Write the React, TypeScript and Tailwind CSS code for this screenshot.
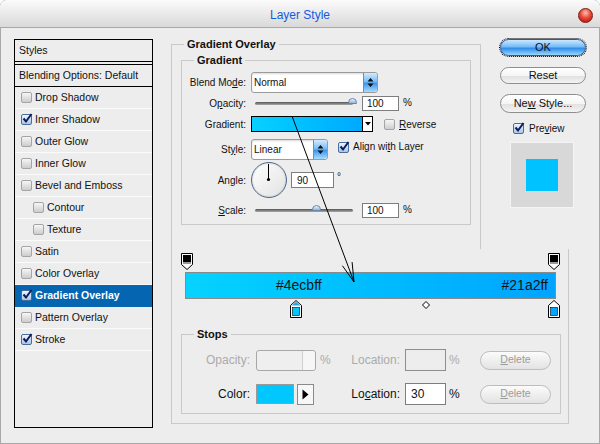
import React from "react";

type StyleItem = { label: string; checked?: boolean; indent?: boolean; selected?: boolean };

const styleItems: StyleItem[] = [
  { label: "Drop Shadow" },
  { label: "Inner Shadow", checked: true },
  { label: "Outer Glow" },
  { label: "Inner Glow" },
  { label: "Bevel and Emboss" },
  { label: "Contour", indent: true },
  { label: "Texture", indent: true },
  { label: "Satin" },
  { label: "Color Overlay" },
  { label: "Gradient Overlay", checked: true, selected: true },
  { label: "Pattern Overlay" },
  { label: "Stroke", checked: true },
];

function CheckBox({ checked }: { checked?: boolean }) {
  return (
    <span
      className={
        checked
          ? "relative inline-flex w-[11px] h-[11px] shrink-0 rounded-[2px] border border-[#4a6c9b] bg-gradient-to-b from-[#eef5fd] to-[#a9c6e6]"
          : "relative inline-flex w-[11px] h-[11px] shrink-0 rounded-[2px] border border-[#a4a4a4] bg-gradient-to-b from-[#f6f6f6] to-[#cdcdcd]"
      }
    >
      {checked && (
        <svg width="11" height="11" viewBox="0 0 11 11" className="absolute left-[0px] top-[-2px]">
          <path d="M1.5 5.5 L4 8.5 L9.5 1" stroke="#0b1d5c" strokeWidth="2" fill="none" />
        </svg>
      )}
    </span>
  );
}

function Spinner() {
  return (
    <span className="w-[14px] h-full rounded-r-[3px] border-l border-[#5b8fd0] bg-[linear-gradient(to_bottom,#d3ebff_0%,#78bdf7_45%,#3d95ea_55%,#a9dcff_100%)] flex items-center justify-center">
      <svg width="7" height="11" viewBox="0 0 7 11">
        <path d="M3.5 1 L6.5 4.5 H0.5 Z M3.5 10 L6.5 6.5 H0.5 Z" fill="#111" />
      </svg>
    </span>
  );
}

function Slider({ thumb }: { thumb: string }) {
  return (
    <div className="relative w-[106px] h-full flex items-center px-[4px]">
      <div className="h-[3px] w-full rounded-full bg-gradient-to-b from-[#555] to-[#aaa]" />
      <span
        className={`absolute top-[2px] w-[9px] h-[6px] rounded-t-full border border-[#6a86a8] bg-gradient-to-b from-[#eef5ff] to-[#8fb4dc] ${thumb}`}
      />
    </div>
  );
}

function NumField({ value, className }: { value: string; className: string }) {
  return (
    <div className={`border border-[#7d7d7d] bg-white flex items-center text-[10px] ${className}`}>{value}</div>
  );
}

function Pill({ children, className }: { children: React.ReactNode; className: string }) {
  return (
    <div
      className={`rounded-full border flex items-center justify-center ${className}`}
    >
      {children}
    </div>
  );
}

function TopStop() {
  return (
    <svg width="12" height="17" viewBox="0 0 12 17">
      <path d="M0.5 0.5 H11.5 V11.5 L6 16.5 L0.5 11.5 Z" fill="#fff" stroke="#000" />
      <rect x="2" y="2" width="8" height="7" fill="#000" />
      <rect x="2" y="9" width="8" height="2" fill="#9a9a9a" />
    </svg>
  );
}

function BottomStop({ color, selected }: { color: string; selected?: boolean }) {
  return (
    <svg width="12" height="18" viewBox="0 0 12 18">
      <path d="M6 0.5 L11.5 5.5 V17.5 H0.5 V5.5 Z" fill="#fff" stroke="#000" />
      <path d="M6 1.8 L10.2 5.5 H1.8 Z" fill={selected ? "#25a3e2" : "#fff"} />
      <rect x="2.5" y="7.5" width="7" height="8" fill={color} stroke="#000" strokeWidth="0.6" />
    </svg>
  );
}

function TitleBar() {
  return (
    <div className="h-[28px] border-b border-[#a7a7a7] bg-gradient-to-b from-[#fbfbfb] to-[#d9d9d9] rounded-t-[6px] grid grid-cols-[1fr_auto_1fr] items-center">
      <span />
      <span className="text-[12px] text-[#1559e0] pt-[3px]">Layer Style</span>
      <span className="justify-self-end mr-[7px] mt-[4px] w-[15px] h-[15px] rounded-full border border-[#7a1a12] bg-[radial-gradient(circle_at_50%_30%,#ffc2b6_0%,#ea4a38_45%,#a40e08_100%)]" />
    </div>
  );
}

function StylesPanel() {
  return (
    <div className="w-[139px] h-[389px] border border-black flex flex-col text-[10.5px]">
      <div className="h-[25px] border-b-[4px] border-double border-black pl-[4px] flex items-center">Styles</div>
      <div className="h-[22px] border-b border-black pl-[4px] flex items-center">Blending Options: Default</div>
      {styleItems.map((item) => (
        <div
          key={item.label}
          className={
            item.selected
              ? "h-[22px] border-b border-[#0565b0] bg-[#0565b0] text-white font-bold flex items-center"
              : "h-[22px] border-b border-[#fbfbfb] flex items-center"
          }
        >
          <span className={item.indent ? "ml-[18px] flex items-center" : "ml-[6px] flex items-center"}>
            <CheckBox checked={item.checked} />
          </span>
          <span className="ml-[3px]">{item.label}</span>
        </div>
      ))}
    </div>
  );
}

function OverlayBox() {
  return (
    <div className="relative mt-[5px] w-[310px] h-[205px] border-x border-t border-[#c9c9c9]">
      <span className="absolute left-[12px] top-[-8px] bg-[#ededed] px-[3px] text-[11px] font-bold leading-[14px]">
        Gradient Overlay
      </span>
      <div className="relative ml-[9px] mt-[15px] w-[290px] h-[165px] border border-[#c9c9c9] text-[10px]">
        <span className="absolute left-[12px] top-[-8px] bg-[#ededed] px-[3px] text-[11px] font-bold leading-[14px]">
          Gradient
        </span>

        <div className="mt-[11px] h-[21px] flex items-center">
          <span className="w-[64px] text-right">
            Blend Mo<span className="underline">d</span>e:
          </span>
          <div className="ml-[5px] w-[127px] h-[21px] rounded-[3px] border border-[#9b9b9b] bg-white flex items-center shadow-[inset_0_1px_2px_rgba(0,0,0,0.15)]">
            <span className="flex-1 pl-[2px]">Normal</span>
            <Spinner />
          </div>
        </div>

        <div className="mt-[3px] h-[15px] flex items-center">
          <span className="w-[64px] text-right">
            O<span className="underline">p</span>acity:
          </span>
          <div className="ml-[5px] h-full">
            <Slider thumb="left-[97px]" />
          </div>
          <NumField value="100" className="ml-[5px] w-[37px] h-[15px] pl-[4px]" />
          <span className="ml-[4px] mt-[-3px]">%</span>
        </div>

        <div className="mt-[5px] h-[16px] flex items-center">
          <span className="w-[64px] text-right">Gradient:</span>
          <div className="ml-[5px] w-[122px] h-[16px] border border-black flex">
            <div className="flex-1 bg-[linear-gradient(to_right,#08d0ff,#00c2ff_40%,#00aaff)]" />
            <div className="w-[10px] border-l border-black bg-white flex items-center justify-center">
              <svg width="6" height="4" viewBox="0 0 6 4">
                <path d="M0 0 H6 L3 3.5 Z" fill="#000" />
              </svg>
            </div>
          </div>
          <span className="ml-[11px] flex items-center">
            <CheckBox />
          </span>
          <span className="ml-[4px]">
            <span className="underline">R</span>everse
          </span>
        </div>

        <div className="mt-[7px] h-[21px] flex items-center">
          <span className="w-[64px] text-right">
            St<span className="underline">y</span>le:
          </span>
          <div className="ml-[5px] w-[77px] h-[21px] rounded-[3px] border border-[#9b9b9b] bg-white flex items-center shadow-[inset_0_1px_2px_rgba(0,0,0,0.15)]">
            <span className="flex-1 pl-[2px]">Linear</span>
            <Spinner />
          </div>
          <span className="ml-[10px] mt-[-5px] flex items-center">
            <CheckBox checked />
          </span>
          <span className="ml-[4px] mt-[-7px]">
            Align wi<span className="underline">t</span>h Layer
          </span>
        </div>

        <div className="mt-[2px] h-[36px] flex items-center">
          <span className="w-[64px] text-right">
            An<span className="underline">g</span>le:
          </span>
          <div className="ml-[5px] w-[36px] h-[36px] rounded-full border-[1.5px] border-[#4f678c] bg-gradient-to-br from-white to-[#e2e2e2] shadow-[inset_0_0_2px_rgba(0,0,0,0.25)]">
            <svg width="33" height="33" viewBox="0 0 33 33">
              <line x1="16.5" y1="16.5" x2="16.5" y2="1" stroke="#000" strokeWidth="1" />
              <circle cx="16.5" cy="16.5" r="1.6" fill="#000" />
            </svg>
          </div>
          <NumField value="90" className="ml-[4px] w-[43px] h-[16px] pl-[5px]" />
          <span className="ml-[3px] mt-[-8px]">°</span>
        </div>

        <div className="mt-[5px] h-[15px] flex items-center">
          <span className="w-[64px] text-right">
            <span className="underline">S</span>cale:
          </span>
          <div className="ml-[5px] h-full">
            <Slider thumb="left-[61px]" />
          </div>
          <NumField value="100" className="ml-[5px] w-[37px] h-[15px] pl-[4px]" />
          <span className="ml-[4px] mt-[-3px]">%</span>
        </div>
      </div>
    </div>
  );
}

function SideButtons() {
  return (
    <div className="ml-[19px] w-[86px] flex flex-col text-[11px]">
      <Pill className="h-[17px] border-[#2f5a96] outline outline-1 outline-dotted outline-black bg-[linear-gradient(to_bottom,#cbe7ff_0%,#74bcf8_45%,#2f8de8_55%,#98d6ff_100%)]">
        OK
      </Pill>
      <Pill className="mt-[11px] h-[17px] border-[#8e8e8e] bg-[linear-gradient(to_bottom,#ffffff_0%,#f5f5f5_50%,#e2e2e2_55%,#f3f3f3_100%)]">
        Reset
      </Pill>
      <Pill className="mt-[10px] h-[19px] border-[#8e8e8e] bg-[linear-gradient(to_bottom,#ffffff_0%,#f5f5f5_50%,#e2e2e2_55%,#f3f3f3_100%)]">
        <span>
          Ne<span className="underline">w</span> Style...
        </span>
      </Pill>
      <div className="mt-[10px] h-[11px] pl-[13px] flex items-center text-[10px]">
        <CheckBox checked />
        <span className="ml-[5px]">
          Pre<span className="underline">v</span>iew
        </span>
      </div>
      <div className="mt-[8px] ml-[10px] w-[64px] h-[66px] bg-[#d8d8d8] border border-[#f4f4f4] flex items-center justify-center">
        <div className="w-[32px] h-[32px] bg-[#00c2ff]" />
      </div>
    </div>
  );
}

function GradientEditor() {
  return (
    <div className="relative w-[398px] h-[175px] border-x border-b border-[#c9c9c9]">
      <div className="relative ml-[13px] mt-[4px] w-[371px] h-[17px]">
        <span className="absolute left-[-4px] top-0">
          <TopStop />
        </span>
        <span className="absolute left-[363px] top-0">
          <TopStop />
        </span>
      </div>

      <div className="relative ml-[13px] mt-[2px] w-[371px] h-[27px] border border-[#8a8a8a] bg-[linear-gradient(to_right,#06d2ff_0%,#00c6ff_30%,#00a4ff_100%)] text-[14px] text-[#141414]">
        <span className="absolute left-[90px] top-0 bottom-0 flex items-center">#4ecbff</span>
        <span className="absolute right-[7px] top-0 bottom-0 flex items-center">#21a2ff</span>
      </div>

      <div className="relative ml-[13px] mt-[1px] w-[371px] h-[18px]">
        <span className="absolute left-[105px] top-0">
          <BottomStop color="#00c6ff" selected />
        </span>
        <span className="absolute left-[237px] top-[1px]">
          <svg width="8" height="8" viewBox="0 0 8 8">
            <path d="M4 0.5 L7.5 4 L4 7.5 L0.5 4 Z" fill="#fff" stroke="#000" />
          </svg>
        </span>
        <span className="absolute left-[363px] top-0">
          <BottomStop color="#00a6ff" />
        </span>
      </div>

      <div className="relative ml-[9px] mt-[16px] w-[380px] h-[80px] border border-[#c9c9c9] text-[12px]">
        <span className="absolute left-[12px] top-[-8px] bg-[#ededed] px-[3px] text-[11px] font-bold leading-[14px]">
          Stops
        </span>

        <div className="mt-[14px] h-[22px] flex items-center text-[#ababab]">
          <span className="w-[68px] text-right">Opacity:</span>
          <div className="w-[101px] pl-[6px] flex items-center">
            <div className="w-[60px] h-[21px] rounded-[3px] border border-[#a8a8a8] bg-[#efefef] flex justify-end">
              <span className="w-[13px] h-full border-l border-[#d0d0d0] bg-[#f6f6f6] rounded-r-[3px]" />
            </div>
            <span className="ml-[4px]">%</span>
          </div>
          <span className="w-[49px] text-right">Location:</span>
          <div className="ml-[5px] w-[41px] h-[22px] border border-[#8e8e8e] bg-[#ededed]" />
          <span className="w-[34px] pl-[3px]">%</span>
          <Pill className="w-[71px] h-[19px] border-[#bdbdbd] bg-gradient-to-b from-[#fbfbfb] to-[#e3e3e3] text-[10.5px] text-[#9c9c9c]">
            <span>
              <span className="underline">D</span>elete
            </span>
          </Pill>
        </div>

        <div className="mt-[12px] h-[22px] flex items-center">
          <span className="w-[68px] text-right">Color:</span>
          <div className="w-[101px] pl-[6px] flex items-center">
            <div className="w-[38px] h-[20px] border border-[#9a9a9a] bg-[#00c8ff]" />
            <div className="ml-[3px] w-[17px] h-[21px] border border-[#8a8a8a] bg-[#f7f7f7] flex items-center justify-center">
              <svg width="7" height="11" viewBox="0 0 7 11">
                <path d="M0.5 0.5 L6.5 5.5 L0.5 10.5 Z" fill="#000" />
              </svg>
            </div>
          </div>
          <span className="w-[49px] text-right">
            Lo<span className="underline">c</span>ation:
          </span>
          <div className="ml-[5px] w-[41px] h-[22px] border border-[#7d7d7d] bg-white pl-[5px] flex items-center">30</div>
          <span className="w-[34px] pl-[3px]">%</span>
          <Pill className="w-[71px] h-[19px] border-[#bdbdbd] bg-gradient-to-b from-[#fbfbfb] to-[#e3e3e3] text-[10.5px] text-[#9c9c9c]">
            <span>
              <span className="underline">D</span>elete
            </span>
          </Pill>
        </div>
      </div>
    </div>
  );
}

function Arrow() {
  return (
    <svg className="absolute left-0 top-0 pointer-events-none" width="600" height="444" viewBox="0 0 600 444">
      <line x1="292" y1="116" x2="354" y2="282" stroke="#000" strokeWidth="1" />
      <polyline points="342.4,265.7 354,282 352.1,262.1" fill="none" stroke="#000" strokeWidth="1" />
    </svg>
  );
}

export default function App() {
  return (
    <div className="relative w-[600px] h-[444px] overflow-hidden rounded-t-[6px] bg-[#ededed] text-[#111] font-['Liberation_Sans',Arial,sans-serif] shadow-[inset_0_0_0_1px_#a9a9a9]">
      <TitleBar />
      <div className="flex pl-[14px] pt-[11px]">
        <StylesPanel />
        <div className="ml-[18px] flex flex-col">
          <div className="h-[210px] flex items-start">
            <OverlayBox />
            <SideButtons />
          </div>
          <GradientEditor />
        </div>
      </div>
      <Arrow />
    </div>
  );
}
